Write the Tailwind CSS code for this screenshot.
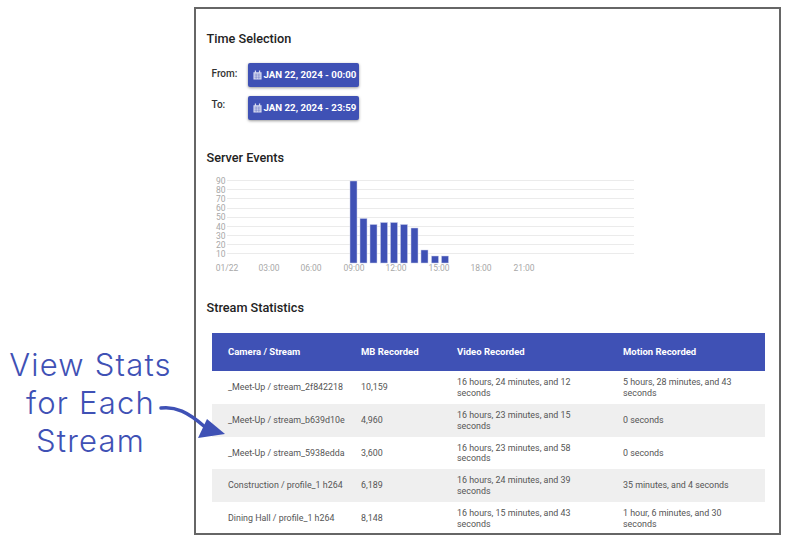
<!DOCTYPE html>
<html lang="en">
<head>
    <meta charset="UTF-8">
    <meta name="viewport" content="width=device-width, initial-scale=1.0">
    <title>Stream Statistics</title>
    <script src="https://cdn.jsdelivr.net/npm/@tailwindcss/browser@4"></script>
</head>
<body class="relative w-[788px] h-[540px] overflow-hidden bg-white flex font-['Roboto',sans-serif]">

    <!-- callout on the left -->
    <div class="w-[194px] shrink-0 pt-[346px] pr-[13px] text-center text-[#3f51b5] font-['Inter',sans-serif] font-light text-[31px] tracking-[1.2px] leading-[38px]">
        <p>View Stats</p>
        <p>for Each</p>
        <p>Stream</p>
    </div>

    <!-- arrow runs over the frame edge -->
    <svg class="absolute left-[155px] top-[400px] z-10" width="80" height="45" viewBox="0 0 80 45" fill="none">
        <path d="M6 8 C 20 6, 33 12, 50 27" stroke="#3f51b5" stroke-width="3.5" stroke-linecap="round"/>
        <polygon points="43,38 70,34 52,19" fill="#3f51b5"/>
    </svg>

    <!-- screenshot frame -->
    <main class="mt-[7px] w-[587px] h-[528px] border-2 border-[#666666] overflow-hidden pl-[10.5px] text-[#333333]">
        <h2 class="mt-[21px] text-[12.7px] leading-[18px] font-medium text-[#222222]">Time Selection</h2>

        <div class="mt-[15px] pl-[5px] flex flex-col gap-[9px]">
            <div class="flex">
                <span class="w-[36.5px] pt-[4px] text-[10px] leading-[14px] font-medium">From:</span>
                <button class="w-[111px] h-[24px] flex items-center gap-[1.5px] pl-[5px] rounded-[2px] bg-[#3f51b5] text-white text-[9.7px] font-bold shadow-[0_1px_3px_rgba(0,0,0,0.4)]">
                    <svg width="9" height="10" viewBox="0 0 10 11" fill="#d9dcf0"><path d="M0.5 2.5h9v8h-9z M2 0.5h1.4v2H2z M6.6 0.5H8v2H6.6z"/><path d="M1.5 4.5h7M1.5 6.5h7M1.5 8.5h7M3.5 4v6M6.5 4v6" stroke="#3f51b5" stroke-width="0.4"/></svg>
                    JAN 22, 2024 - 00:00
                </button>
            </div>
            <div class="flex">
                <span class="w-[36.5px] pt-[2px] text-[10px] leading-[14px] font-medium">To:</span>
                <button class="w-[111px] h-[24px] flex items-center gap-[1.5px] pl-[5px] rounded-[2px] bg-[#3f51b5] text-white text-[9.7px] font-bold shadow-[0_1px_3px_rgba(0,0,0,0.4)]">
                    <svg width="9" height="10" viewBox="0 0 10 11" fill="#d9dcf0"><path d="M0.5 2.5h9v8h-9z M2 0.5h1.4v2H2z M6.6 0.5H8v2H6.6z"/><path d="M1.5 4.5h7M1.5 6.5h7M1.5 8.5h7M3.5 4v6M6.5 4v6" stroke="#3f51b5" stroke-width="0.4"/></svg>
                    JAN 22, 2024 - 23:59
                </button>
            </div>
        </div>

        <h2 class="mt-[29px] text-[12.7px] leading-[18px] font-medium text-[#222222]">Server Events</h2>

        <!-- chart, drawn in page coords minus frame origin -->
        <svg class="block mt-[3px]" width="440" height="105" viewBox="207 170 440 105" font-family="Roboto, sans-serif" font-size="8.5" fill="#a8a8a8">
            <g stroke="#ebebeb" stroke-width="1">
                <path d="M216 180.5H634M216 189.5H634M216 198.5H634M216 208.5H634M216 217.5H634M216 226.5H634M216 235.5H634M216 244.5H634M216 253.5H634"/>
            </g>
            <g>
                <rect x="216" y="177" width="11" height="78" fill="white"/>
                <text x="216" y="184">90</text><text x="216" y="193">80</text><text x="216" y="202">70</text>
                <text x="216" y="211">60</text><text x="216" y="220">50</text><text x="216" y="230">40</text>
                <text x="216" y="239">30</text><text x="216" y="248">20</text><text x="216" y="257">10</text>
            </g>
            <g fill="#3f51b5" stroke="#c9cfea" stroke-width="0.5">
                <rect x="350" y="181" width="7" height="82"/>
                <rect x="360" y="218.5" width="7" height="44.5"/>
                <rect x="370" y="224.5" width="7" height="38.5"/>
                <rect x="380.5" y="222.5" width="7" height="40.5"/>
                <rect x="390.5" y="222.5" width="7" height="40.5"/>
                <rect x="400.5" y="224.5" width="7" height="38.5"/>
                <rect x="411" y="228" width="7" height="35"/>
                <rect x="421" y="250" width="7" height="13"/>
                <rect x="431.5" y="256" width="7" height="7"/>
                <rect x="441.5" y="256" width="7" height="7"/>
            </g>
            <g text-anchor="middle">
                <text x="227" y="271">01/22</text><text x="269" y="271">03:00</text><text x="311" y="271">06:00</text>
                <text x="354" y="271">09:00</text><text x="396" y="271">12:00</text><text x="439" y="271">15:00</text>
                <text x="481" y="271">18:00</text><text x="524" y="271">21:00</text>
            </g>
        </svg>

        <h2 class="mt-[24px] text-[12.7px] leading-[18px] font-medium text-[#222222]">Stream Statistics</h2>

        <table class="mt-[16px] ml-[5.5px] w-[553px] table-fixed border-collapse text-[8.9px] leading-[10.5px] text-[#555555]">
            <colgroup>
                <col class="w-[133px]"><col class="w-[96px]"><col class="w-[166px]"><col class="w-[158px]">
            </colgroup>
            <thead>
                <tr class="h-[38px] bg-[#3f51b5] text-white text-left text-[9.5px]">
                    <th class="pl-[16px] font-bold">Camera / Stream</th>
                    <th class="pl-[16px] font-bold">MB Recorded</th>
                    <th class="pl-[16px] font-bold">Video Recorded</th>
                    <th class="pl-[16px] font-bold">Motion Recorded</th>
                </tr>
            </thead>
            <tbody>
                <tr class="h-[33px] bg-white">
                    <td class="pl-[16px] whitespace-nowrap">_Meet-Up / stream_2f842218</td><td class="pl-[16px]">10,159</td>
                    <td class="pl-[16px] pr-[20px]">16 hours, 24 minutes, and 12 seconds</td><td class="pl-[16px] pr-[20px]">5 hours, 28 minutes, and 43 seconds</td>
                </tr>
                <tr class="h-[33px] bg-[#efefef]">
                    <td class="pl-[16px] whitespace-nowrap">_Meet-Up / stream_b639d10e</td><td class="pl-[16px]">4,960</td>
                    <td class="pl-[16px] pr-[20px]">16 hours, 23 minutes, and 15 seconds</td><td class="pl-[16px] pr-[20px]">0 seconds</td>
                </tr>
                <tr class="h-[32px] bg-white">
                    <td class="pl-[16px] whitespace-nowrap">_Meet-Up / stream_5938edda</td><td class="pl-[16px]">3,600</td>
                    <td class="pl-[16px] pr-[20px]">16 hours, 23 minutes, and 58 seconds</td><td class="pl-[16px] pr-[20px]">0 seconds</td>
                </tr>
                <tr class="h-[33px] bg-[#efefef]">
                    <td class="pl-[16px] whitespace-nowrap">Construction / profile_1 h264</td><td class="pl-[16px]">6,189</td>
                    <td class="pl-[16px] pr-[20px]">16 hours, 24 minutes, and 39 seconds</td><td class="pl-[16px] pr-[20px]">35 minutes, and 4 seconds</td>
                </tr>
                <tr class="h-[33px] bg-white">
                    <td class="pl-[16px] whitespace-nowrap">Dining Hall / profile_1 h264</td><td class="pl-[16px]">8,148</td>
                    <td class="pl-[16px] pr-[20px]">16 hours, 15 minutes, and 43 seconds</td><td class="pl-[16px] pr-[20px]">1 hour, 6 minutes, and 30 seconds</td>
                </tr>
            </tbody>
        </table>
    </main>
</body>
</html>
